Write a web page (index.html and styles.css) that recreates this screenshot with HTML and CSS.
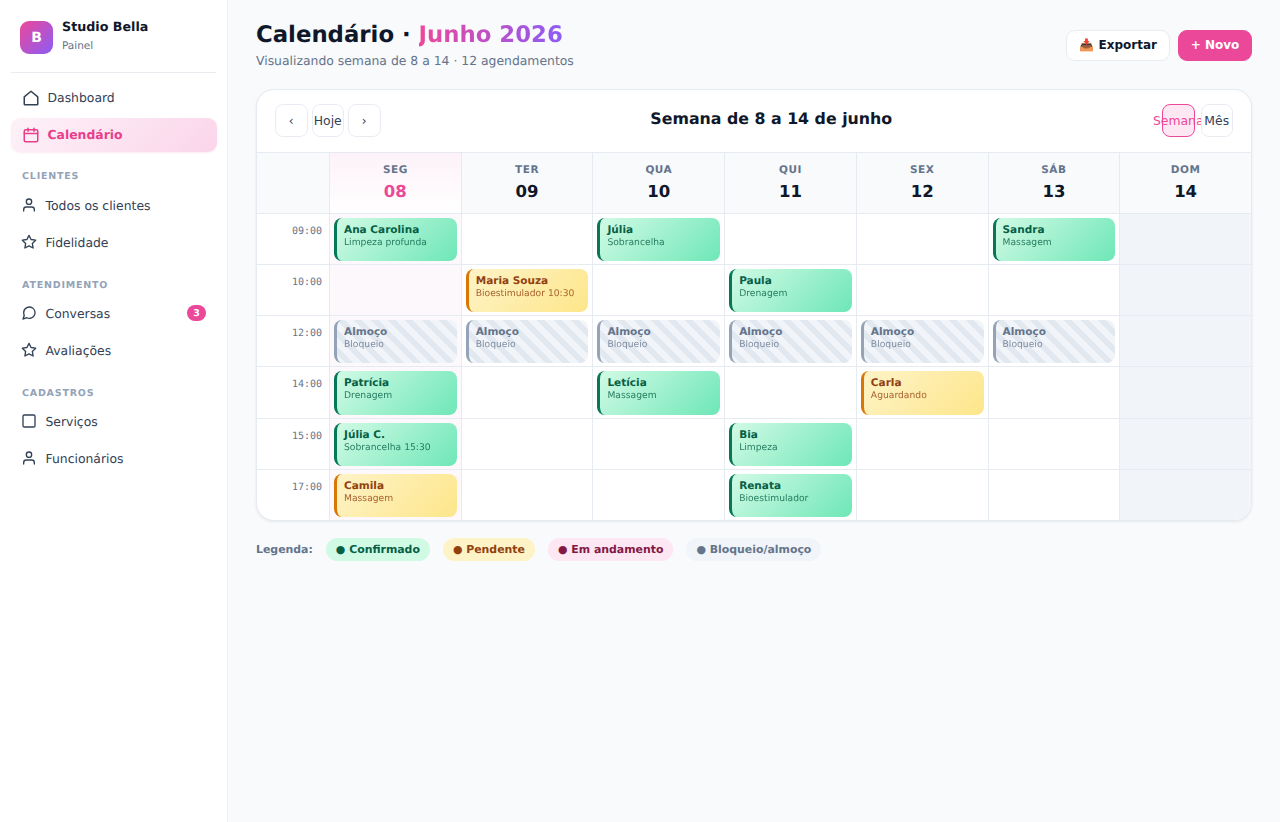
FILE: index.html
```html
<!DOCTYPE html>
<html lang="pt-BR">
<head>
<meta charset="utf-8">
<title>Calendário</title>
<link rel="stylesheet" href="styles.css">
</head>
<body>
<div class="app">
  <aside class="sidebar">
    <div class="brand">
      <div class="logo">B</div>
      <div class="brand-text"><strong>Studio Bella</strong><span>Painel</span></div>
    </div>
    <nav class="nav">
      <a class="item big"><svg class="ic18" viewBox="0 0 24 24"><path d="M3 10.5 12 3l9 7.5V20a1 1 0 0 1-1 1H4a1 1 0 0 1-1-1z"/></svg>Dashboard</a>
      <a class="item big active"><svg class="ic18" viewBox="0 0 24 24"><rect x="3" y="5" width="18" height="16" rx="2"/><path d="M16 3v4M8 3v4M3 10h18"/></svg>Calendário</a>
      <div class="label first">CLIENTES</div>
      <a class="item"><svg class="ic16" viewBox="0 0 24 24"><path d="M20 21v-2a4 4 0 0 0-4-4H8a4 4 0 0 0-4 4v2"/><circle cx="12" cy="7" r="4"/></svg>Todos os clientes</a>
      <a class="item"><svg class="ic16" viewBox="0 0 24 24"><path d="m12 2 3.09 6.26L22 9.27l-5 4.87 1.18 6.88L12 17.77l-6.18 3.25L7 14.14 2 9.27l6.91-1.01z"/></svg>Fidelidade</a>
      <div class="label">ATENDIMENTO</div>
      <a class="item"><svg class="ic16" viewBox="0 0 24 24"><path d="M21 11.5a8.38 8.38 0 0 1-.9 3.8 8.5 8.5 0 0 1-7.6 4.7 8.38 8.38 0 0 1-3.8-.9L3 21l1.9-5.7a8.38 8.38 0 0 1-.9-3.8 8.5 8.5 0 0 1 4.7-7.6 8.38 8.38 0 0 1 3.8-.9h.5a8.48 8.48 0 0 1 8 8z"/></svg>Conversas<span class="badge">3</span></a>
      <a class="item"><svg class="ic16" viewBox="0 0 24 24"><path d="m12 2 3.09 6.26L22 9.27l-5 4.87 1.18 6.88L12 17.77l-6.18 3.25L7 14.14 2 9.27l6.91-1.01z"/></svg>Avaliações</a>
      <div class="label">CADASTROS</div>
      <a class="item"><svg class="ic16" viewBox="0 0 24 24"><rect x="3" y="3" width="18" height="18" rx="2"/></svg>Serviços</a>
      <a class="item"><svg class="ic16" viewBox="0 0 24 24"><path d="M20 21v-2a4 4 0 0 0-4-4H8a4 4 0 0 0-4 4v2"/><circle cx="12" cy="7" r="4"/></svg>Funcionários</a>
    </nav>
  </aside>

  <main class="main">
    <header class="top">
      <div>
        <h1>Calendário · <span class="grad">Junho 2026</span></h1>
        <p class="sub">Visualizando semana de 8 a 14 · 12 agendamentos</p>
      </div>
      <div class="actions">
        <button class="btn">📥 Exportar</button>
        <button class="btn primary">+ Novo</button>
      </div>
    </header>

    <section class="card">
      <div class="toolbar">
        <div class="tgroup">
          <button class="sq arrow">‹</button>
          <button class="sq">Hoje</button>
          <button class="sq arrow">›</button>
        </div>
        <h2>Semana de 8 a 14 de junho</h2>
        <div class="tgroup wide">
          <button class="sq on">Semana</button>
          <button class="sq">Mês</button>
        </div>
      </div>
      <div class="grid">
        <div class="cell head"></div>
        <div class="cell head today"><span>SEG</span><b>08</b></div>
        <div class="cell head"><span>TER</span><b>09</b></div>
        <div class="cell head"><span>QUA</span><b>10</b></div>
        <div class="cell head"><span>QUI</span><b>11</b></div>
        <div class="cell head"><span>SEX</span><b>12</b></div>
        <div class="cell head"><span>SÁB</span><b>13</b></div>
        <div class="cell head"><span>DOM</span><b>14</b></div>

        <div class="cell time">09:00</div>
        <div class="cell tint"><div class="ev ok"><b>Ana Carolina</b><small>Limpeza profunda</small></div></div>
        <div class="cell"></div>
        <div class="cell"><div class="ev ok"><b>Júlia</b><small>Sobrancelha</small></div></div>
        <div class="cell"></div>
        <div class="cell"></div>
        <div class="cell"><div class="ev ok"><b>Sandra</b><small>Massagem</small></div></div>
        <div class="cell off"></div>

        <div class="cell time">10:00</div>
        <div class="cell tint"></div>
        <div class="cell"><div class="ev wait"><b>Maria Souza</b><small>Bioestimulador 10:30</small></div></div>
        <div class="cell"></div>
        <div class="cell"><div class="ev ok"><b>Paula</b><small>Drenagem</small></div></div>
        <div class="cell"></div>
        <div class="cell"></div>
        <div class="cell off"></div>

        <div class="cell time">12:00</div>
        <div class="cell tint"><div class="ev lunch"><b>Almoço</b><small>Bloqueio</small></div></div>
        <div class="cell"><div class="ev lunch"><b>Almoço</b><small>Bloqueio</small></div></div>
        <div class="cell"><div class="ev lunch"><b>Almoço</b><small>Bloqueio</small></div></div>
        <div class="cell"><div class="ev lunch"><b>Almoço</b><small>Bloqueio</small></div></div>
        <div class="cell"><div class="ev lunch"><b>Almoço</b><small>Bloqueio</small></div></div>
        <div class="cell"><div class="ev lunch"><b>Almoço</b><small>Bloqueio</small></div></div>
        <div class="cell off"></div>

        <div class="cell time">14:00</div>
        <div class="cell tint"><div class="ev ok"><b>Patrícia</b><small>Drenagem</small></div></div>
        <div class="cell"></div>
        <div class="cell"><div class="ev ok"><b>Letícia</b><small>Massagem</small></div></div>
        <div class="cell"></div>
        <div class="cell"><div class="ev wait"><b>Carla</b><small>Aguardando</small></div></div>
        <div class="cell"></div>
        <div class="cell off"></div>

        <div class="cell time">15:00</div>
        <div class="cell tint"><div class="ev ok"><b>Júlia C.</b><small>Sobrancelha 15:30</small></div></div>
        <div class="cell"></div>
        <div class="cell"></div>
        <div class="cell"><div class="ev ok"><b>Bia</b><small>Limpeza</small></div></div>
        <div class="cell"></div>
        <div class="cell"></div>
        <div class="cell off"></div>

        <div class="cell time">17:00</div>
        <div class="cell tint"><div class="ev wait"><b>Camila</b><small>Massagem</small></div></div>
        <div class="cell"></div>
        <div class="cell"></div>
        <div class="cell"><div class="ev ok"><b>Renata</b><small>Bioestimulador</small></div></div>
        <div class="cell"></div>
        <div class="cell"></div>
        <div class="cell off"></div>
      </div>
    </section>

    <div class="legend">
      <span class="lg-title">Legenda:</span>
      <span class="pill p-ok">● Confirmado</span>
      <span class="pill p-wait">● Pendente</span>
      <span class="pill p-prog">● Em andamento</span>
      <span class="pill p-lunch">● Bloqueio/almoço</span>
    </div>
  </main>
</div>
</body>
</html>
```
FILE: styles.css
```css
* { box-sizing: border-box; }
html, body { margin: 0; height: 100%; }
body { font-family: "DejaVu Sans", sans-serif; background: #f8fafc; color: #0f172a; text-rendering: geometricPrecision; }
.app { display: flex; min-height: 822px; }

.sidebar { width: 228px; flex: none; background: #fff; border-right: 1px solid #edf1f6; padding: 21px 11px; }
.brand { display: flex; gap: 9px; padding: 0 9px 18px; border-bottom: 1px solid #e8ecf1; }
.logo { width: 33px; height: 33px; border-radius: 9px; background: linear-gradient(135deg, #ec4899, #8b5cf6); color: #fff; font-weight: 700; font-size: 14px; display: flex; align-items: center; justify-content: center; }
.brand-text { display: flex; flex-direction: column; }
.brand-text strong { font-size: 12.7px; line-height: 11px; height: 14px; }
.brand-text span { font-size: 10.5px; color: #64748b; margin-top: 4px; line-height: 14px; }

.nav { display: flex; flex-direction: column; gap: 3px; margin-top: 8px; width: 206px; }
.item { display: flex; align-items: center; gap: 7.5px; height: 34px; padding: 0 11px; font-size: 12.4px; color: #334155; border-radius: 9px; }
.item.big { padding-bottom: 2px; }
.item svg { fill: none; stroke: currentColor; stroke-width: 2; stroke-linecap: round; stroke-linejoin: round; flex: none; }
.item.big svg { margin-bottom: -2px; }
.ic16 { width: 16px; height: 16px; margin-left: -1px; margin-right: 1px; }
.ic18 { width: 18px; height: 18px; }
.item.active { font-weight: 600; background: linear-gradient(135deg, #fdf2f8, #fbd5ea); color: #e83e8c; box-shadow: 0 1px 2px rgba(236,72,153,.1); }
.badge { margin-left: auto; background: #ec4899; color: #fff; font-size: 9.5px; font-weight: 700; width: 19px; height: 16px; border-radius: 8px; display: flex; align-items: center; justify-content: center; }
.label { font-size: 9.5px; font-weight: 700; letter-spacing: .8px; color: #94a3b8; line-height: 12px; margin: 18px 0 1px 11px; }
.label.first { margin: 16px 0 2px 11px; }

.main { flex: 1; min-width: 0; padding: 20px 28px 0; }
.top { display: flex; justify-content: space-between; align-items: center; height: 50px; margin-bottom: 19px; }
h1 { margin: 1px 0 0; font-size: 22.8px; line-height: 27px; font-weight: 700; color: #0f172a; }
.grad { background: linear-gradient(90deg, #ec4899, #8b5cf6); -webkit-background-clip: text; background-clip: text; color: transparent; }
.sub { margin: 4px 0 0; font-size: 12.4px; line-height: 16px; color: #64748b; }
.actions { display: flex; gap: 8px; }
.btn { height: 31px; padding: 0 12px; border: 1px solid #e8ecf2; background: #fff; border-radius: 9px; font: 700 12px "DejaVu Sans", sans-serif; color: #0f172a; }
.btn.primary { background: #ec4899; border-color: #ec4899; color: #fff; padding: 0 11.7px; }

.card { background: #fff; border: 1px solid #e6ebf2; border-radius: 18px; overflow: hidden; box-shadow: 0 1px 3px rgba(15,23,42,.08); }
.toolbar { display: flex; justify-content: space-between; align-items: center; height: 62px; padding: 14px 18px 15px; }
.tgroup { display: flex; gap: 4px; }
.tgroup.wide { gap: 6px; }
h2 { margin: 0 0 4px; font-size: 15.8px; line-height: 20px; font-weight: 700; color: #0f172a; }
.sq { width: 32.5px; height: 32.5px; padding: 0; display: flex; justify-content: center; align-items: center; white-space: nowrap; background: #fff; border: 1px solid #e8ecf2; border-radius: 8px; font: 12.4px "DejaVu Sans", sans-serif; color: #334155; }
.sq.arrow { font-size: 12px; }
.sq.on { background: #fce7f3; border-color: #ec4899; color: #ec4899; }

.grid { display: grid; grid-template-columns: 72px repeat(7, 1fr); grid-template-rows: 61px repeat(6, 51.15px); }
.cell { border-top: 1px solid #e6ebf2; border-left: 1px solid #e6ebf2; padding: 4px; min-width: 0; }
.cell:nth-child(8n+1) { border-left: 0; }
.head { background: #f8fafc; display: flex; flex-direction: column; align-items: center; padding: 10px 0 0; }
.head span { font-size: 10.5px; line-height: 14px; font-weight: 700; letter-spacing: .5px; color: #64748b; }
.head b { font-size: 16.5px; line-height: 20px; margin-top: 5px; color: #0f172a; }
.head.today { background: linear-gradient(180deg, #fdf2f8, #fff); }
.head.today b { color: #ec4899; }
.time { font: 10px "DejaVu Sans Mono", monospace; color: #64748b; text-align: right; padding: 12px 7px 0 0; }
.tint { background: #fdf8fc; }
.off { background: #f1f5f9; }

.ev { height: 43.15px; border-radius: 8px; border-left: 3px solid; padding: 6px 7px 4px; display: flex; flex-direction: column; }
.ev b { font-size: 10.5px; line-height: 13px; font-weight: 700; }
.ev small { font-size: 9.2px; line-height: 12px; opacity: .8; }
.ok { background: linear-gradient(135deg, #d1fae5, #6ee7b7); border-color: #047857; color: #065f46; }
.wait { background: linear-gradient(135deg, #fef3c7, #fde68a); border-color: #d97706; color: #92400e; }
.lunch { background: repeating-linear-gradient(45deg, #f1f5f9 0 6px, #e2e8f0 6px 12px); border-color: #94a3b8; color: #64748b; }

.legend { display: flex; align-items: center; gap: 13px; margin-top: 17px; font-size: 10.92px; font-weight: 700; }
.lg-title { color: #64748b; }
.pill { height: 23px; padding: 0 10px; border-radius: 12px; display: flex; align-items: center; }
.p-ok { background: #d1fae5; color: #065f46; }
.p-wait { background: #fef3c7; color: #92400e; }
.p-prog { background: #fce7f3; color: #831843; }
.p-lunch { background: #f1f5f9; color: #64748b; }
```
